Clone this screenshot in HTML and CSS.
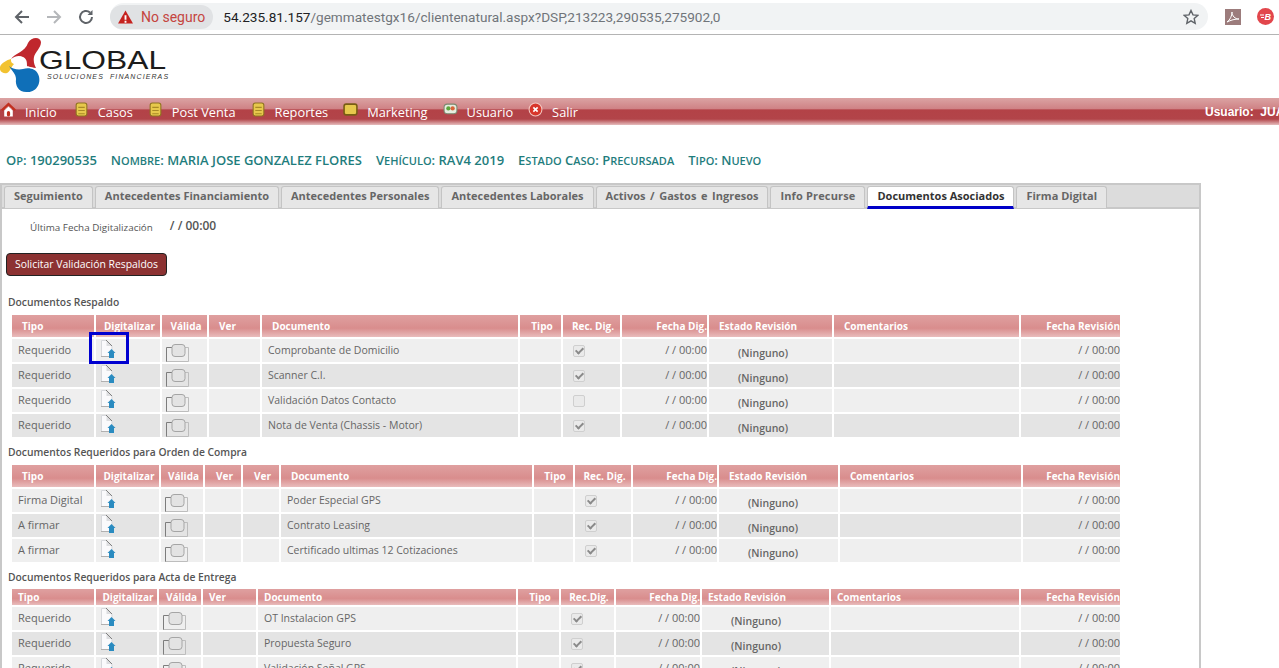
FILE: index.html
```html
<!DOCTYPE html>
<html lang="es">
<head>
    <meta charset="UTF-8">
    <title>Documentos Asociados</title>
    <link rel="stylesheet" href="styles.css">
</head>
<body>
    <svg class="sprites" width="0" height="0">
        <symbol id="ico-doc" viewBox="0 0 16 18">
            <path d="M1.500 .5h5l5.500 5.500v10.500H1.500z" fill="#fafafc" stroke="#d6d8dc"/>
            <path d="M6.500 .5v5.500H12z" fill="#dcdde0"/>
            <path d="M6 0l6 6" stroke="#808080" fill="none"/>
            <path d="M1 16.500h8" stroke="#b0b0b0" fill="none"/>
            <path d="M11.500 9l4 4H14v5H9v-5H7.500z" fill="#2a8bc0"/>
        </symbol>
        <symbol id="ico-box" viewBox="0 0 23 18">
            <path d="M.5 18V3.500H6" fill="none" stroke="#7d7d7d"/>
            <path d="M.5 17.500h22V3.500H19" fill="none" stroke="#bdbdbd"/>
            <rect x="6" y=".5" width="13" height="12" rx="3" fill="#e3e3e3" stroke="#a5a5a5"/>
        </symbol>
        <symbol id="ico-note" viewBox="0 0 14 14">
            <rect x="2" y="1" width="10" height="12" rx="2" fill="#e7c84c" stroke="#8f7420"/>
            <path d="M4 5h6M4 8h6M4 11h6" stroke="#a98a25"/>
        </symbol>
    </svg>

    <div class="browser-bar">
        <svg class="nav-ico" width="18" height="18" viewBox="0 0 18 18"><path d="M16 9H3M9 3L3 9l6 6" fill="none" stroke="#5f6368" stroke-width="2"/></svg>
        <svg class="nav-ico" width="18" height="18" viewBox="0 0 18 18"><path d="M2 9h13M9 3l6 6-6 6" fill="none" stroke="#b5b7ba" stroke-width="2"/></svg>
        <svg class="nav-ico" width="18" height="18" viewBox="0 0 18 18"><path d="M15 9a6 6 0 1 1-2-4.500" fill="none" stroke="#5f6368" stroke-width="2"/><path d="M15.500 2v5h-5z" fill="#5f6368"/></svg>
        <div class="omnibox">
            <div class="not-secure">
                <svg width="15" height="14" viewBox="0 0 16 14"><path d="M8 0l8 14H0z" fill="#c5221f"/><path d="M7 5h2v5H7zM7 11h2v2H7z" fill="#fff"/></svg>
                <span>No seguro</span>
            </div>
            <div class="url">54.235.81.157<span class="url-path">/gemmatestgx16/clientenatural.aspx?DSP,213223,290535,275902,0</span></div>
            <svg class="star" width="16" height="16" viewBox="0 0 16 16"><path d="M8 1.500l2 4.400 4.700.5-3.500 3.200 1 4.700L8 11.900l-4.200 2.400 1-4.700L1.300 6.400 6 5.900z" fill="none" stroke="#5f6368" stroke-width="1.400"/></svg>
        </div>
        <svg class="ext-pdf" width="16" height="16" viewBox="0 0 16 16"><rect width="16" height="16" fill="#9c7c7c"/><path d="M2 13c3-2 5-6 5-10 0 4 3 7 7 7-4 0-8 1-12 3z" fill="none" stroke="#fff"/></svg>
        <svg class="ext-b" width="17" height="17" viewBox="0 0 17 17"><circle cx="8.500" cy="8.500" r="8.500" fill="#e2464c"/><path d="M3 7h4M4 9.500h3" stroke="#fff"/><text x="7.500" y="12" font-family="Liberation Sans" font-size="9" font-weight="bold" font-style="italic" fill="#fff">B</text></svg>
    </div>

    <div class="logo-row">
        <svg class="logo-mark" width="44" height="58" viewBox="0 0 44 58">
            <path d="M28 6C31 0 40-1 41 5c0 6-6 10-7 15-1 5 1 9 2 11-6-1-9-2-9-2 0-4 0-7-4-9-4-2-8-1-12 2 4-6 14-7 17-16z" fill="#c0272d"/>
            <path d="M11 22c-4 1-10 4-11 8-1 5 4 7 7 6 3-1 4-6 7-9-3-1-3-3-3-5z" fill="#f2c230"/>
            <path d="M9 29c3 3 9 4 14 3 6-2 13 0 15 5 4 8-1 18-10 18-9 1-13-6-12-13 0-5-4-8-7-13z" fill="#0f6fb8"/>
            <circle cx="20" cy="25" r="5.500" fill="#fff"/>
        </svg>
        <div class="logo-text">
            <div class="logo-name">GLOBAL</div>
            <div class="logo-sub">SOLUCIONES &nbsp;FINANCIERAS</div>
        </div>
    </div>

    <nav class="menu">
        <a><svg width="15" height="15" viewBox="0 0 14 14"><path d="M3 8l4-3.500L11 8v5.500H3z" fill="#fff"/><path d="M7 .5L0 7l1.500 1.500L7 3.500l5.500 5L14 7z" fill="#c2301f"/><rect x="5.500" y="8.500" width="3" height="5" rx="1.500" fill="#c2301f"/></svg>Inicio</a>
        <a><svg width="15" height="15"><use href="#ico-note"/></svg>Casos</a>
        <a><svg width="15" height="15"><use href="#ico-note"/></svg>Post Venta</a>
        <a><svg width="15" height="15"><use href="#ico-note"/></svg>Reportes</a>
        <a><svg width="15" height="15" viewBox="0 0 14 14"><rect x="1" y="2" width="12" height="10" rx="2" fill="#e7c84c" stroke="#7a5d14" stroke-width="1.500"/></svg>Marketing</a>
        <a><svg width="15" height="15" viewBox="0 0 14 14"><rect x="1" y="2" width="12" height="9" rx="3" fill="#e6ede0" stroke="#7c8a70"/><circle cx="5" cy="6" r="2" fill="#5ea63d"/><circle cx="9" cy="6" r="2" fill="#d9653a"/></svg>Usuario</a>
        <a><svg width="15" height="15" viewBox="0 0 14 14"><circle cx="7" cy="7" r="6" fill="#d8352a" stroke="#f2c6c0"/><path d="M5 5l4 4M9 5l-4 4" stroke="#fff" stroke-width="1.500"/></svg>Salir</a>
        <span class="menu-user">Usuario:&nbsp; JUAN</span>
    </nav>

    <div class="case-info">
        <span>O<small>P</small>: 190290535</span>
        <span>N<small>OMBRE</small>: MARIA JOSE GONZALEZ FLORES</span>
        <span>V<small>EHÍCULO</small>: RAV4 2019</span>
        <span>E<small>STADO</small> C<small>ASO</small>: P<small>RECURSADA</small></span>
        <span>T<small>IPO</small>: N<small>UEVO</small></span>
    </div>

    <div class="panel">
        <div class="tabs">
            <div class="tab">Seguimiento</div>
            <div class="tab">Antecedentes Financiamiento</div>
            <div class="tab">Antecedentes Personales</div>
            <div class="tab">Antecedentes Laborales</div>
            <div class="tab tab-spaced">Activos / Gastos e Ingresos</div>
            <div class="tab tab-info">Info Precurse</div>
            <div class="tab active">Documentos Asociados</div>
            <div class="tab">Firma Digital</div>
        </div>

        <div class="last-date">
            <span class="last-date-label">Última Fecha Digitalización</span>
            <span class="last-date-value">/ / 00:00</span>
        </div>

        <button class="btn-validate">Solicitar Validación Respaldos</button>

        <h3 class="section-title first">Documentos Respaldo</h3>
        <div class="docs docs-respaldo">
            <div class="row head"><div>Tipo</div><div class="c">Digitalizar</div><div class="c">Válida</div><div>Ver</div><div>Documento</div><div class="c">Tipo</div><div class="c">Rec. Dig.</div><div class="r">Fecha Dig.</div><div>Estado Revisión</div><div>Comentarios</div><div class="r">Fecha Revisión</div></div>
            <div class="row"><div class="kind">Requerido</div><div class="ico"><svg class="doc-ico"><use href="#ico-doc"/></svg></div><div class="ico"><svg class="box-ico"><use href="#ico-box"/></svg></div><div></div><div class="doc-name">Comprobante de Domicilio</div><div></div><div class="ck"><span class="check on"></span></div><div class="r">/ / 00:00</div><div class="state">(Ninguno)</div><div></div><div class="r">/ / 00:00</div></div>
            <div class="row"><div class="kind">Requerido</div><div class="ico"><svg class="doc-ico"><use href="#ico-doc"/></svg></div><div class="ico"><svg class="box-ico"><use href="#ico-box"/></svg></div><div></div><div class="doc-name">Scanner C.I.</div><div></div><div class="ck"><span class="check on"></span></div><div class="r">/ / 00:00</div><div class="state">(Ninguno)</div><div></div><div class="r">/ / 00:00</div></div>
            <div class="row"><div class="kind">Requerido</div><div class="ico"><svg class="doc-ico"><use href="#ico-doc"/></svg></div><div class="ico"><svg class="box-ico"><use href="#ico-box"/></svg></div><div></div><div class="doc-name">Validación Datos Contacto</div><div></div><div class="ck"><span class="check"></span></div><div class="r">/ / 00:00</div><div class="state">(Ninguno)</div><div></div><div class="r">/ / 00:00</div></div>
            <div class="row"><div class="kind">Requerido</div><div class="ico"><svg class="doc-ico"><use href="#ico-doc"/></svg></div><div class="ico"><svg class="box-ico"><use href="#ico-box"/></svg></div><div></div><div class="doc-name">Nota de Venta (Chassis - Motor)</div><div></div><div class="ck"><span class="check on"></span></div><div class="r">/ / 00:00</div><div class="state">(Ninguno)</div><div></div><div class="r">/ / 00:00</div></div>
        </div>

        <h3 class="section-title">Documentos Requeridos para Orden de Compra</h3>
        <div class="docs docs-compra">
            <div class="row head"><div>Tipo</div><div class="c">Digitalizar</div><div class="c">Válida</div><div class="c">Ver</div><div class="c">Ver</div><div>Documento</div><div class="c">Tipo</div><div class="c">Rec. Dig.</div><div class="r">Fecha Dig.</div><div>Estado Revisión</div><div>Comentarios</div><div class="r">Fecha Revisión</div></div>
            <div class="row"><div class="kind">Firma Digital</div><div class="ico"><svg class="doc-ico"><use href="#ico-doc"/></svg></div><div class="ico"><svg class="box-ico"><use href="#ico-box"/></svg></div><div></div><div></div><div class="doc-name">Poder Especial GPS</div><div></div><div class="ck"><span class="check on"></span></div><div class="r">/ / 00:00</div><div class="state">(Ninguno)</div><div></div><div class="r">/ / 00:00</div></div>
            <div class="row"><div class="kind">A firmar</div><div class="ico"><svg class="doc-ico"><use href="#ico-doc"/></svg></div><div class="ico"><svg class="box-ico"><use href="#ico-box"/></svg></div><div></div><div></div><div class="doc-name">Contrato Leasing</div><div></div><div class="ck"><span class="check on"></span></div><div class="r">/ / 00:00</div><div class="state">(Ninguno)</div><div></div><div class="r">/ / 00:00</div></div>
            <div class="row"><div class="kind">A firmar</div><div class="ico"><svg class="doc-ico"><use href="#ico-doc"/></svg></div><div class="ico"><svg class="box-ico"><use href="#ico-box"/></svg></div><div></div><div></div><div class="doc-name">Certificado ultimas 12 Cotizaciones</div><div></div><div class="ck"><span class="check on"></span></div><div class="r">/ / 00:00</div><div class="state">(Ninguno)</div><div></div><div class="r">/ / 00:00</div></div>
        </div>

        <h3 class="section-title">Documentos Requeridos para Acta de Entrega</h3>
        <div class="docs docs-acta">
            <div class="row head"><div>Tipo</div><div class="c">Digitalizar</div><div class="c">Válida</div><div>Ver</div><div>Documento</div><div class="c">Tipo</div><div class="c">Rec.Dig.</div><div class="r">Fecha Dig.</div><div>Estado Revisión</div><div>Comentarios</div><div class="r">Fecha Revisión</div></div>
            <div class="row"><div class="kind">Requerido</div><div class="ico"><svg class="doc-ico"><use href="#ico-doc"/></svg></div><div class="ico"><svg class="box-ico"><use href="#ico-box"/></svg></div><div></div><div class="doc-name">OT Instalacion GPS</div><div></div><div class="ck"><span class="check on"></span></div><div class="r">/ / 00:00</div><div class="state">(Ninguno)</div><div></div><div class="r">/ / 00:00</div></div>
            <div class="row"><div class="kind">Requerido</div><div class="ico"><svg class="doc-ico"><use href="#ico-doc"/></svg></div><div class="ico"><svg class="box-ico"><use href="#ico-box"/></svg></div><div></div><div class="doc-name">Propuesta Seguro</div><div></div><div class="ck"><span class="check on"></span></div><div class="r">/ / 00:00</div><div class="state">(Ninguno)</div><div></div><div class="r">/ / 00:00</div></div>
            <div class="row"><div class="kind">Requerido</div><div class="ico"><svg class="doc-ico"><use href="#ico-doc"/></svg></div><div class="ico"><svg class="box-ico"><use href="#ico-box"/></svg></div><div></div><div class="doc-name">Validación Señal GPS</div><div></div><div class="ck"><span class="check on"></span></div><div class="r">/ / 00:00</div><div class="state">(Ninguno)</div><div></div><div class="r">/ / 00:00</div></div>
        </div>

        <div class="highlight"></div>
    </div>
</body>
</html>
```

FILE: styles.css
```css
html, body {
    margin: 0;
    height: 668px;
    overflow: hidden;
    background: #fff;
    font-family: "Open Sans", sans-serif;
}
.sprites {
    position: absolute;
}

/* browser toolbar */
.browser-bar {
    height: 33px;
    padding-bottom: 1px;
    border-bottom: 1px solid #b4b4b4;
    display: flex;
    align-items: center;
    padding-left: 13px;
}
.nav-ico {
    margin-right: 14px;
}
.omnibox {
    width: 1098px;
    height: 27px;
    margin-left: 1px;
    border-radius: 14px;
    background: #f1f3f4;
    display: flex;
    align-items: center;
}
.not-secure {
    height: 24px;
    padding: 0 8px;
    border-radius: 12px;
    background: #e0e2e4;
    display: flex;
    align-items: center;
    gap: 8px;
    color: #c5453f;
    font-family: Roboto, sans-serif;
    font-size: 14px;
}
.url {
    margin-left: 10px;
    font-family: Roboto, sans-serif;
    font-size: 13.6px;
    color: #202124;
}
.url-path {
    color: #70757a;
}
.star {
    margin-left: auto;
    margin-right: 9px;
}
.ext-pdf {
    margin-left: 17px;
}
.ext-b {
    margin-left: 16px;
}

/* logo */
.logo-row {
    height: 63px;
    display: flex;
}
.logo-mark {
    margin-top: 2px;
}
.logo-text {
    margin-left: -5px;
    margin-top: 12px;
}
.logo-name {
    font-family: "Liberation Sans", sans-serif;
    font-size: 25px;
    line-height: 26px;
    color: #1c1c1c;
    transform: scaleX(1.27);
    transform-origin: left;
}
.logo-sub {
    margin-left: 8px;
    font-family: "Liberation Sans", sans-serif;
    font-size: 7px;
    font-style: italic;
    letter-spacing: 1.1px;
    color: #333;
}

/* main menu */
.menu {
    height: 27px;
    background: linear-gradient(#dba3a3 0, #cf8285 40%, #b34247 44%, #b24449 78%, #e6bdbd 100%);
    display: flex;
    align-items: center;
    padding-left: 1px;
    color: #fff;
    font-size: 12.8px;
    white-space: nowrap;
    overflow: hidden;
}
.menu a {
    display: flex;
    align-items: center;
    margin-right: 15px;
    gap: 9px;
}
.menu a:first-child {
    margin-right: 17px;
}
.menu a svg {
    margin-top: -5px;
}
.menu-user {
    margin-left: auto;
    margin-right: -14px;
    font-family: "Liberation Sans", sans-serif;
    font-weight: bold;
    font-size: 12px;
}

/* case header */
.case-info {
    margin-top: 27px;
    padding-left: 6px;
    display: flex;
    gap: 14px;
    color: #1f7d7d;
    font-size: 13px;
    line-height: 16px;
    font-weight: 600;
    white-space: nowrap;
}
.case-info small {
    font-size: 11px;
    line-height: 1;
}

/* tabs and panel */
.panel {
    position: relative;
    width: 1197px;
    height: 483px;
    margin-top: 15px;
    border: 2px solid #c8c8c8;
    border-bottom: none;
    overflow: hidden;
}
.tabs {
    height: 22px;
    background: #dcdcdc;
    border-bottom: 2px solid #c8c8c8;
    display: flex;
    gap: 2px;
    padding-left: 2px;
}
.tab {
    height: 21px;
    margin-top: 1px;
    padding: 0 9px;
    border: 1px solid #c4c4c4;
    border-bottom: none;
    border-radius: 3px 3px 0 0;
    background: #e6e6e6;
    color: #666;
    font-size: 11px;
    line-height: 18px;
    font-weight: 700;
    white-space: nowrap;
}
.tab-spaced {
    word-spacing: 1.75px;
}
.tab-info {
    letter-spacing: 0.15px;
}
.tab.active {
    height: 19px;
    background: #fff;
    color: #333;
    border-bottom: 3px solid #0000c8;
}
.last-date {
    display: flex;
    align-items: center;
    gap: 17px;
    height: 18px;
    margin-top: 9px;
    padding-left: 28px;
}
.last-date-label {
    font-size: 9.85px;
    color: #555;
}
.last-date-value {
    padding-bottom: 4px;
    font-size: 12px;
    font-weight: 600;
    color: #555;
}
.btn-validate {
    display: block;
    width: 161px;
    height: 23px;
    margin: 17px 0 0 4px;
    padding: 0 0 2px;
    background: #8c3232;
    border: 1px solid #222;
    border-radius: 4px;
    color: #fff;
    font-family: "Open Sans", sans-serif;
    font-size: 10.4px;
}

/* document tables */
.section-title {
    margin: 8px 0 6px 6px;
    font-size: 10.3px;
    line-height: 14px;
    font-weight: 600;
    color: #555;
}
.section-title.first {
    margin-top: 19px;
}
.docs {
    display: grid;
    row-gap: 2px;
    margin-left: 10px;
    font-size: 11px;
    color: #666;
}
.row {
    display: grid;
    column-gap: 2px;
    grid-auto-rows: 23px;
    line-height: 22px;
    white-space: nowrap;
}
.row > div {
    background: #efefef;
    overflow: hidden;
}
.row:nth-child(odd) > div {
    background: #e4e4e4;
}
.docs-respaldo .row {
    grid-template-columns: 82px 64px 45px 51px 256px 41px 57px 85px 123px 185px 99px;
}
.docs-compra .row {
    grid-template-columns: 82px 63px 42px 36px 36px 251px 39px 56px 84px 119px 181px 97px;
}
.docs-acta {
    margin-top: -1px;
}
.docs-acta .row {
    grid-template-columns: 82px 61px 42px 53px 258px 41px 53px 84px 127px 188px 99px;
}

/* header row */
.row.head {
    grid-auto-rows: 22px;
    line-height: 22px;
    font-size: 10px;
    font-weight: 700;
    color: #fff;
}
.row.head > div {
    padding-left: 10px;
    background: linear-gradient(#dfa0a0 0, #d98d8d 60%, #e9bcbc 100%);
}
.row.head > .c {
    padding-left: 3px;
    text-align: center;
}
.row.head > .r {
    padding-left: 0;
    text-align: right;
}
.docs-acta .row.head {
    grid-auto-rows: 16px;
    line-height: 16px;
}
.docs-acta .row.head > div:not(.c):not(.r) {
    padding-left: 6px;
}

/* body cells */
.row .kind {
    padding-left: 6px;
}
.row .r {
    text-align: right;
}
.row .doc-name {
    padding-left: 6px;
    font-size: 10.5px;
}
.row .state {
    padding-left: 29px;
    font-size: 10.5px;
    line-height: 29px;
    font-weight: 600;
}
.row .ck {
    padding-left: 10px;
}
.row .ico {
    padding-left: 4px;
}
.doc-ico {
    display: block;
    width: 16px;
    height: 18px;
    margin-top: 1px;
}
.box-ico {
    display: block;
    width: 23px;
    height: 18px;
    margin-top: 5px;
}
.check {
    display: inline-block;
    width: 10px;
    height: 10px;
    border: 1px solid #cfcfcf;
    border-radius: 2px;
    background: #eaeaea;
    position: relative;
    vertical-align: middle;
}
.check.on::after {
    content: "";
    position: absolute;
    left: 3px;
    top: 0;
    width: 3px;
    height: 6px;
    border: solid #8a8a8a;
    border-width: 0 2px 2px 0;
    transform: rotate(45deg);
}

/* blue marker drawn over the first row */
.highlight {
    position: absolute;
    left: 87px;
    top: 147px;
    width: 34px;
    height: 26px;
    border: 3px solid #0000d0;
}
```
